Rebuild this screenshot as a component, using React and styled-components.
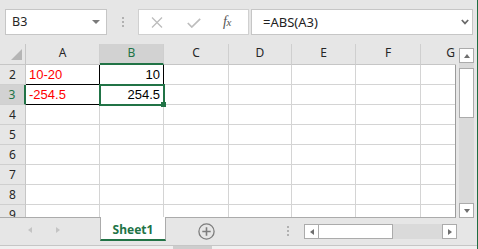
import React from "react";
import styled, { createGlobalStyle } from "styled-components";

const GREEN = "#217346";
const COLS = "26px 74px 64px 65px 63px 64px 65px 60px";

const GlobalStyle = createGlobalStyle`
  html, body { margin: 0; padding: 0; background: #e6e6e6; }
  *, *::before, *::after { box-sizing: border-box; }
`;

const Window = styled.div`
  width: 478px;
  height: 249px;
  background: #e6e6e6;
  border-right: 1px solid #1f6e43;
  display: flex;
  flex-direction: column;
  overflow: hidden;
  font-family: "Noto Sans", "Open Sans", sans-serif;
  color: #262626;
`;

/* ---------- formula bar ---------- */
const FormulaBar = styled.div`
  flex: none;
  height: 44px;
  display: flex;
  align-items: flex-start;
  padding: 9px 0 0 5px;
`;

const NameBox = styled.div`
  width: 102px;
  height: 26px;
  background: #fff;
  border: 1px solid #c6c6c6;
  display: flex;
  align-items: center;
  justify-content: space-between;
  padding: 0 6px;
  font-size: 12.5px;
  line-height: 24px;
`;

const DropTriangle = styled.span`
  width: 0;
  height: 0;
  border-left: 4px solid transparent;
  border-right: 4px solid transparent;
  border-top: 4px solid #7a7a7a;
  margin-top: -1px;
`;

const Grip = styled.div`
  width: 30px;
  height: 26px;
  margin-left: 1px;
  display: flex;
  flex-direction: ${(p) => (p.$horizontal ? "column" : "column")};
  align-items: center;
  justify-content: center;
  gap: 2px;
`;

const Dot = styled.span`
  width: 2px;
  height: 2px;
  background: #b1b1b1;
`;

const FxBox = styled.div`
  width: 111px;
  height: 26px;
  margin-left: 0;
  background: #fff;
  border: 1px solid #d0d0d0;
  display: flex;
  align-items: center;
  padding-left: 12px;
`;

const FxIcon = styled.svg`
  flex: none;
  margin-left: ${(p) => p.$gap || 0}px;
  margin-top: ${(p) => p.$dy || 0}px;
`;

const FxLabel = styled.span`
  margin-left: 22px;
  font-family: "Liberation Serif", "DejaVu Serif", serif;
  font-style: italic;
  font-size: 14px;
  line-height: 24px;
  color: #555;
  letter-spacing: -0.5px;
  & > small {
    font-size: 11px;
  }
`;

const FormulaInput = styled.div`
  width: 222px;
  height: 26px;
  margin-left: 2px;
  background: #fff;
  border: 1px solid #c6c6c6;
  display: flex;
  align-items: center;
  justify-content: space-between;
  padding: 0 3px 0 11px;
  font-size: 13px;
  line-height: 24px;
  color: #222;
`;

/* ---------- sheet ---------- */
const Main = styled.div`
  flex: none;
  height: 174px;
  display: flex;
`;

const Sheet = styled.div`
  width: 456px;
  display: flex;
  flex-direction: column;
  overflow: hidden;
`;

const HeaderRow = styled.div`
  flex: none;
  height: 21px;
  display: grid;
  grid-template-columns: ${COLS};
`;

const Corner = styled.div`
  background: #e6e6e6;
  border-right: 1px solid #c6c6c6;
  border-bottom: 1px solid #c6c6c6;
  display: flex;
  align-items: flex-end;
  justify-content: flex-end;
  padding: 0 3px 4px 0;
`;

const CornerTriangle = styled.span`
  width: 0;
  height: 0;
  border-left: 11px solid transparent;
  border-bottom: 11px solid #b5b5b5;
`;

const ColHeader = styled.div`
  background: ${(p) => (p.$selected ? "#d2d2d2" : "#e6e6e6")};
  border-right: 1px solid #cfcfcf;
  border-bottom: ${(p) => (p.$selected ? `2px solid ${GREEN}` : "1px solid #c6c6c6")};
  color: ${(p) => (p.$selected ? GREEN : "#262626")};
  font-size: 12px;
  line-height: 17px;
  text-align: center;
  overflow: hidden;
`;

const Body = styled.div`
  flex: 1;
  display: grid;
  grid-template-columns: ${COLS};
  grid-auto-rows: 20px;
  align-content: start;
  overflow: hidden;
  border-right: 1px solid #9b9b9b;
  border-bottom: 1px solid #ababab;
`;

const RowHeader = styled.div`
  background: ${(p) => (p.$selected ? "#d2d2d2" : "#e6e6e6")};
  border-right: ${(p) => (p.$selected ? `2px solid ${GREEN}` : "1px solid #c6c6c6")};
  border-bottom: 1px solid #cfcfcf;
  color: ${(p) => (p.$selected ? GREEN : "#262626")};
  font-size: 12px;
  line-height: 20px;
  text-align: center;
  overflow: hidden;
`;

const Cell = styled.div`
  position: relative;
  background: #fff;
  border-right: 1px solid ${(p) => (p.$bR ? "#000" : "#d4d4d4")};
  border-bottom: 1px solid ${(p) => (p.$bB ? "#000" : "#d4d4d4")};
  padding: 0 3px;
  font-family: "Liberation Sans", Arial, sans-serif;
  font-size: 13px;
  line-height: 20px;
  white-space: nowrap;
  text-align: ${(p) => p.$align || "left"};
  color: ${(p) => p.$color || "#000"};
`;

const Selection = styled.span`
  position: absolute;
  top: -1px;
  left: -1px;
  right: -2px;
  bottom: -2px;
  border: 2px solid ${GREEN};
  pointer-events: none;
  z-index: 1;
`;

const FillHandle = styled.span`
  position: absolute;
  right: -3px;
  bottom: -3px;
  width: 5px;
  height: 5px;
  background: ${GREEN};
`;

/* ---------- scrollbars ---------- */
const VScroll = styled.div`
  width: 21px;
  display: flex;
  flex-direction: column;
  padding: 4px 0 0 3px;
`;

const ScrollBtn = styled.div`
  flex: none;
  width: 15px;
  height: 15px;
  border: 1px solid #ababab;
  background: #fff;
  display: flex;
  align-items: center;
  justify-content: center;
`;

const Arrow = styled.span`
  width: 0;
  height: 0;
  ${(p) =>
    p.$dir === "up"
      ? `border-left: 3.5px solid transparent; border-right: 3.5px solid transparent; border-bottom: 4px solid ${p.$color || "#6f6f6f"};`
      : p.$dir === "down"
      ? `border-left: 3.5px solid transparent; border-right: 3.5px solid transparent; border-top: 4px solid ${p.$color || "#6f6f6f"};`
      : p.$dir === "left"
      ? `border-top: 3.5px solid transparent; border-bottom: 3.5px solid transparent; border-right: 4px solid ${p.$color || "#6f6f6f"};`
      : `border-top: 3.5px solid transparent; border-bottom: 3.5px solid transparent; border-left: 4px solid ${p.$color || "#6f6f6f"};`}
`;

const VTrack = styled.div`
  flex: 1;
  width: 15px;
  background: #dadada;
  padding-top: 5px;
`;

const VThumb = styled.div`
  width: 15px;
  height: 50px;
  background: #fff;
  border: 1px solid #ababab;
`;

/* ---------- tab bar ---------- */
const TabBar = styled.div`
  flex: none;
  height: 27px;
  display: flex;
  align-items: flex-start;
`;

const NavArea = styled.div`
  width: 100px;
  display: flex;
  gap: 24px;
  padding: 9px 0 0 28px;
`;

const Tab = styled.div`
  position: relative;
  width: 66px;
  height: 24px;
  margin-top: -1px;
  background: #fff;
  border-left: 1px solid #ababab;
  border-right: 1px solid #ababab;
  border-bottom: 2px solid ${GREEN};
  padding-top: 3px;
  text-align: center;
  font-size: 12px;
  font-weight: 700;
  line-height: 19px;
  color: ${GREEN};
`;

const AddSheet = styled.svg`
  flex: none;
  margin: 5px 0 0 32px;
`;

const HGrip = styled.div`
  display: flex;
  flex-direction: column;
  gap: 2px;
  margin: 8px 0 0 72px;
`;

const HScroll = styled.div`
  width: 153px;
  height: 15px;
  margin: 6px 0 0 15px;
  display: flex;
`;

const HThumb = styled.div`
  width: 75px;
  height: 15px;
  margin-left: -1px;
  background: #fff;
  border: 1px solid #ababab;
`;

const HTrack = styled.div`
  flex: 1;
  background: #dadada;
`;

const StatusStrip = styled.div`
  flex: none;
  height: 4px;
  border-top: 1px solid #c6c6c6;
  background: #f0f0f0;
  display: flex;
`;

const StripBlock = styled.span`
  width: 39px;
  height: 3px;
  margin-left: 173px;
  background: #cdcdcd;
`;

const columns = ["A", "B", "C", "D", "E", "F", "G"];

const rows = [
  {
    n: 2,
    cells: [
      { v: "10-20", color: "#ff0000", bR: true, bB: true },
      { v: "10", align: "right", bR: true },
    ],
  },
  {
    n: 3,
    selected: true,
    cells: [
      { v: "-254.5", color: "#ff0000", bR: true, bB: true },
      { v: "254.5", align: "right", active: true },
    ],
  },
  { n: 4 },
  { n: 5 },
  { n: 6 },
  { n: 7 },
  { n: 8 },
  { n: 9 },
];

export default function App() {
  return (
    <>
      <GlobalStyle />
      <Window>
        <FormulaBar>
          <NameBox>
            <span>B3</span>
            <DropTriangle />
          </NameBox>
          <Grip>
            <Dot />
            <Dot />
            <Dot />
          </Grip>
          <FxBox>
            <FxIcon width="12" height="11" viewBox="0 0 12 11" $dy={0}>
              <path d="M1 0.5 L11 10.5 M11 0.5 L1 10.5" stroke="#bdbdbd" strokeWidth="1.3" fill="none" />
            </FxIcon>
            <FxIcon width="14" height="10" viewBox="0 0 14 10" $gap={24} $dy={1}>
              <path d="M0.8 5 L4.8 9 L13.2 0.8" stroke="#bdbdbd" strokeWidth="1.7" fill="none" />
            </FxIcon>
            <FxLabel>
              f<small>x</small>
            </FxLabel>
          </FxBox>
          <FormulaInput>
            <span>=ABS(A3)</span>
            <svg width="8" height="6" viewBox="0 0 8 6">
              <path d="M0.8 1 L4 4.4 L7.2 1" stroke="#6a6a6a" strokeWidth="1.7" fill="none" />
            </svg>
          </FormulaInput>
        </FormulaBar>

        <Main>
          <Sheet>
            <HeaderRow>
              <Corner>
                <CornerTriangle />
              </Corner>
              {columns.map((c, i) => (
                <ColHeader key={c} $selected={i === 1}>
                  {c}
                </ColHeader>
              ))}
            </HeaderRow>
            <Body>
              {rows.map((r) => (
                <React.Fragment key={r.n}>
                  <RowHeader $selected={r.selected}>{r.n}</RowHeader>
                  {columns.map((c, i) => {
                    const d = (r.cells && r.cells[i]) || {};
                    return (
                      <Cell key={c} $align={d.align} $color={d.color} $bR={d.bR} $bB={d.bB}>
                        {d.v}
                        {d.active && (
                          <Selection>
                            <FillHandle />
                          </Selection>
                        )}
                      </Cell>
                    );
                  })}
                </React.Fragment>
              ))}
            </Body>
          </Sheet>
          <VScroll>
            <ScrollBtn>
              <Arrow $dir="up" />
            </ScrollBtn>
            <VTrack>
              <VThumb />
            </VTrack>
            <ScrollBtn>
              <Arrow $dir="down" />
            </ScrollBtn>
          </VScroll>
        </Main>

        <TabBar>
          <NavArea>
            <Arrow $dir="left" $color="#c4c4c4" />
            <Arrow $dir="right" $color="#c4c4c4" />
          </NavArea>
          <Tab>Sheet1</Tab>
          <AddSheet width="17" height="17" viewBox="0 0 17 17">
            <circle cx="8.5" cy="8.5" r="7.6" stroke="#7d7d7d" strokeWidth="1.3" fill="none" />
            <path d="M8.5 4.3 V12.7 M4.3 8.5 H12.7" stroke="#7d7d7d" strokeWidth="1.6" />
          </AddSheet>
          <HGrip>
            <Dot />
            <Dot />
            <Dot />
          </HGrip>
          <HScroll>
            <ScrollBtn>
              <Arrow $dir="left" />
            </ScrollBtn>
            <HThumb />
            <HTrack />
            <ScrollBtn>
              <Arrow $dir="right" />
            </ScrollBtn>
          </HScroll>
        </TabBar>
        <StatusStrip>
          <StripBlock />
        </StatusStrip>
      </Window>
    </>
  );
}
